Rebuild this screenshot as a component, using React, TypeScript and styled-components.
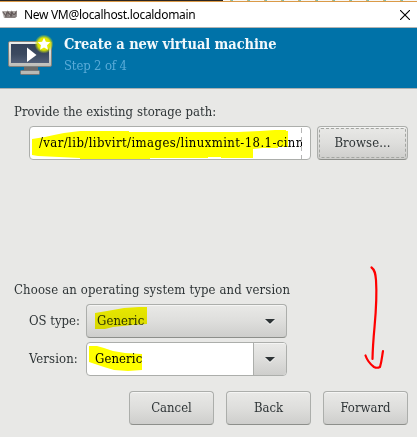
import React from "react";
import styled, { createGlobalStyle } from "styled-components";

const GlobalStyle = createGlobalStyle`
  * { box-sizing: border-box; }
  html, body { margin: 0; padding: 0; overflow: hidden; background: #e8e8e6; }
`;

const Window = styled.div`
  position: relative;
  width: 417px;
  height: 437px;
  display: flex;
  flex-direction: column;
  overflow: hidden;
  background: #e8e8e6;
  color: #2e3436;
  font-family: "DejaVu Serif Condensed", "DejaVu Serif", serif;
  font-stretch: condensed;
  font-size: 13px;
  line-height: 18px;
`;

const Text = styled.span<{ $spacing?: number }>`
  display: block;
  white-space: pre;
  letter-spacing: ${(p) => p.$spacing ?? 0}px;
`;

const Backdrop = styled.div`
  height: 1px;
  flex: none;
  background:
    linear-gradient(90deg, #2b2521 223px, transparent 223px),
    repeating-linear-gradient(90deg, #f7f7f5 0 9px, #d9b36a 9px 10px, #7fbcae 10px 12px, #f7f7f5 12px 17px);
`;

const TitleBar = styled.header`
  flex: none;
  height: 27px;
  display: flex;
  align-items: center;
  gap: 7px;
  padding: 0 7px 0 2px;
  background: #fff;
  border-top: 1px solid #db9a48;
  border-bottom: 1px solid #b4b4b2;
  color: #000;
  font-family: "Noto Sans", "Open Sans", sans-serif;
  font-size: 12px;
  font-stretch: normal;
  svg { flex: none; }
`;

const Caption = styled(Text)`
  flex: 1;
`;

const Banner = styled.section`
  flex: none;
  height: 61px;
  display: flex;
  gap: 11px;
  padding: 7px 0 0 7px;
  background: #0072a8;
  border-bottom: 1px solid #a9b0b2;
`;

const BannerText = styled.div`
  margin-top: -1px;
`;

const Heading = styled(Text)`
  font-size: 14.5px;
  font-weight: bold;
  line-height: 20px;
  color: #f2f8fb;
`;

const Step = styled(Text)`
  margin-top: 2px;
  line-height: 20px;
  color: #59abd8;
`;

const Body = styled.main`
  flex: 1;
  display: flex;
  flex-direction: column;
  padding: 14px 9px 12px 14px;
`;

const StorageRow = styled.div`
  display: flex;
  gap: 6px;
  margin: 5px 0 0 15px;
`;

const Entry = styled.div`
  position: relative;
  width: 282px;
  height: 34px;
  padding: 7px 8px 0 9px;
  border: 1px solid #acaeab;
  border-radius: 4px;
  background: #fff;
  color: #000;
  overflow: hidden;
`;

const Clip = styled.div`
  width: 263px;
  overflow: hidden;
`;

const CursorGuide = styled.i`
  position: absolute;
  top: 1px;
  bottom: 0;
  right: 8px;
  width: 1px;
  background: repeating-linear-gradient(#b5b5b5 0 5px, transparent 5px 9px);
`;

const Marker = styled.svg`
  position: absolute;
  left: 0;
  top: 0;
  mix-blend-mode: multiply;
  pointer-events: none;
`;

const Button = styled.button<{ $width: number; $focused?: boolean }>`
  position: relative;
  width: ${(p) => p.$width}px;
  height: 34px;
  display: flex;
  align-items: center;
  justify-content: center;
  padding: 0 0 1px;
  border: 1px solid #acaeab;
  border-bottom-color: #8d8f8b;
  border-radius: 4px;
  background: linear-gradient(#e9e9e7, #dededc 50%, #cececc);
  box-shadow: inset 0 1px #f5f5f4;
  color: #2e3436;
  font: inherit;
  &::after {
    content: "";
    display: ${(p) => (p.$focused ? "block" : "none")};
    position: absolute;
    inset: 1px;
    border: 1px dashed #a3a5a1;
    border-radius: 2px;
  }
`;

const SystemSection = styled.section`
  margin-top: 121px;
`;

const Form = styled.div`
  display: grid;
  grid-template-columns: 66px 201px;
  column-gap: 6px;
  row-gap: 4px;
  margin-top: 5px;
`;

const Label = styled.label`
  padding-left: 15px;
  line-height: 33px;
`;

const Select = styled.div<{ $editable?: boolean }>`
  position: relative;
  height: 34px;
  display: flex;
  align-items: stretch;
  justify-content: space-between;
  overflow: hidden;
  border: 1px solid #acaeab;
  border-bottom-color: ${(p) => (p.$editable ? "#acaeab" : "#8d8f8b")};
  border-radius: 4px;
  background: ${(p) => (p.$editable ? "#fff" : "linear-gradient(#e9e9e7, #dededc 50%, #cececc)")};
  box-shadow: ${(p) => (p.$editable ? "none" : "inset 0 1px #f5f5f4")};
  padding-left: ${(p) => (p.$editable ? 8 : 10)}px;
  line-height: 31px;
  color: ${(p) => (p.$editable ? "#000" : "#2e3436")};
`;

const Arrow = styled.span<{ $boxed?: boolean }>`
  width: 33px;
  display: flex;
  align-items: center;
  justify-content: center;
  border-left: ${(p) => (p.$boxed ? "1px solid #acaeab" : "0")};
  background: ${(p) => (p.$boxed ? "linear-gradient(#f5f5f4 1px, #e9e9e7 1px, #dededc 50%, #cececc)" : "none")};
`;

const Actions = styled.footer`
  display: flex;
  justify-content: flex-end;
  gap: 12px;
  margin-top: auto;
`;

const RedArrow = styled.svg`
  position: absolute;
  left: 360px;
  top: 262px;
`;

const Down = () => (
  <svg width="10" height="7" viewBox="0 0 10 7">
    <path d="M0 2H10L5 7Z" fill="#fff" opacity=".7" />
    <path d="M0 1H10L5.4 5.6H4.6Z" fill="#2e3436" />
  </svg>
);

const AppIcon = () => (
  <svg width="15" height="9" viewBox="0 0 15 9">
    <path d="M0 1H15L14 8H2Z" fill="#b0aba8" />
    <path d="M1 2L4 6L5 2M6 6V2L9 6V2M10 6V2L12 5L14 2V7M3 7H13" fill="none" stroke="#625858" strokeWidth="1.1" />
  </svg>
);

const MonitorIcon = () => (
  <svg width="46" height="42" viewBox="0 0 46 42">
    <defs>
      <linearGradient id="screen" x2="0" y2="1">
        <stop stopColor="#34425a" />
        <stop offset=".55" stopColor="#3c4a60" />
        <stop offset="1" stopColor="#536078" />
      </linearGradient>
      <linearGradient id="frame" x2="0" y2="1">
        <stop stopColor="#eeeeec" />
        <stop offset="1" stopColor="#bdbdb8" />
      </linearGradient>
      <radialGradient id="glow">
        <stop stopColor="#f5f500" />
        <stop offset=".65" stopColor="#dde500" />
        <stop offset="1" stopColor="#b5d820" stopOpacity="0" />
      </radialGradient>
    </defs>
    <path d="M17 31H31V36H17Z" fill="#6c6c69" />
    <rect x="13.5" y="35.5" width="19" height="4" rx="1" fill="#b9b9b5" stroke="#777" />
    <rect x="1.5" y="6.5" width="43" height="25" rx="1.5" fill="url(#frame)" stroke="#80827e" />
    <rect x="4" y="9" width="38" height="19" fill="url(#screen)" />
    <path d="M20 12.5V27L29.5 20Z" fill="#fff" />
    <circle cx="37" cy="9" r="9.5" fill="url(#glow)" />
    <path d="M37 2.7L38.9 6.8L43.3 7.2L40 10.2L41 14.8L37 12.4L33 14.8L34 10.2L30.7 7.2L35.1 6.8Z" fill="#fff" />
  </svg>
);

export default function App() {
  return (
    <Window>
      <GlobalStyle />
      <Backdrop />
      <TitleBar>
        <AppIcon />
        <Caption $spacing={-0.31}>New VM@localhost.localdomain</Caption>
        <svg width="10" height="10" viewBox="0 0 10 10">
          <path d="M0 0L10 10M10 0L0 10" stroke="#000" strokeWidth="1.1" />
        </svg>
      </TitleBar>
      <Banner>
        <MonitorIcon />
        <BannerText>
          <Heading $spacing={-0.08}>Create a new virtual machine</Heading>
          <Step $spacing={-0.15}>Step 2 of 4</Step>
        </BannerText>
      </Banner>
      <Body>
        <Text $spacing={0.03}>Provide the existing storage path:</Text>
        <StorageRow>
          <Entry>
            <Clip><Text $spacing={0.41}>/var/lib/libvirt/images/linuxmint-18.1-cinn</Text></Clip>
            <CursorGuide />
            <Marker width="280" height="32">
              <path d="M2 12L15 10L24 8L34 6L50 4H99V5H149L178 5L208 5L230 4L245 3H256V4H258V20H248V21H233L223 22V31H191V30H178V31H120V32H50V31L8 29L2 28Z" fill="#ff0" />
            </Marker>
          </Entry>
          <Button $width={91} $focused><Text $spacing={0.1}>Browse...</Text></Button>
        </StorageRow>
        <SystemSection>
          <Text $spacing={0.14}>Choose an operating system type and version</Text>
          <Form>
            <Label><Text>OS type:</Text></Label>
            <Select>
              <Text $spacing={0.1}>Generic</Text>
              <Arrow><Down /></Arrow>
              <Marker width="100" height="32">
                <path d="M8 8L20 6L37 3L52 2H60V19L45 20L26 22L18 24H8Z" fill="#ff0" />
              </Marker>
            </Select>
            <Label><Text $spacing={0.1}>Version:</Text></Label>
            <Select $editable>
              <Text $spacing={0.1}>Generic</Text>
              <Arrow $boxed><Down /></Arrow>
              <Marker width="100" height="32">
                <path d="M2 3H10L17 5L26 8L38 10L55 11V27L41 28L27 27L17 24L8 21L2 19Z" fill="#ff0" />
              </Marker>
            </Select>
          </Form>
        </SystemSection>
        <Actions>
          <Button $width={85}><Text>Cancel</Text></Button>
          <Button $width={85}><Text>Back</Text></Button>
          <Button $width={85}><Text>Forward</Text></Button>
        </Actions>
      </Body>
      <RedArrow width="36" height="112" viewBox="0 0 36 112" fill="none" stroke="#f00" strokeWidth="2.2" strokeLinecap="round" strokeLinejoin="round">
        <path d="M11.5 5.5C15 8 15.5 12 16 18C18 48 13 67 12.5 97M5.5 93.5C7 98 10 102 14 105C16 106 18 106 20 105C22 98 22 94 23 89" />
      </RedArrow>
    </Window>
  );
}
